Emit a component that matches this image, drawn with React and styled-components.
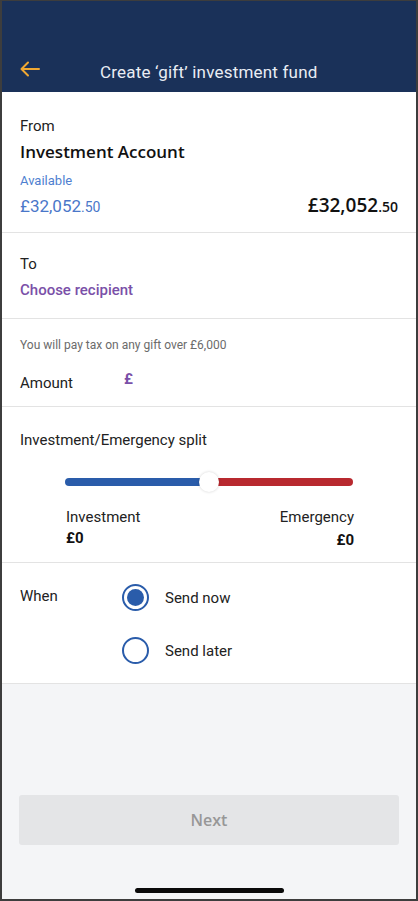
import React, { useState } from 'react';
import styled, { createGlobalStyle } from 'styled-components';

const GlobalStyle = createGlobalStyle`
  html, body {
    margin: 0;
    padding: 0;
    background: #ffffff;
  }
  * {
    box-sizing: border-box;
  }
  body {
    font-family: Roboto, "Liberation Sans", sans-serif;
    color: #1c1c1c;
  }
`;

const App = () => {
  const [when, setWhen] = useState('now');
  const split = 50;

  return (
    <Frame>
      <GlobalStyle />
      <Header>
        <BackButton aria-label="Back">
          <svg width="20" height="16" viewBox="0 0 20 16" fill="none">
            <path d="M19 8H2M8 1.5L1.5 8L8 14.5" stroke="#f0a832" strokeWidth="2" strokeLinecap="round" strokeLinejoin="round" />
          </svg>
        </BackButton>
        <Title>Create ‘gift’ investment fund</Title>
      </Header>

      <Section pad="24px 18px 14px">
        <Label>From</Label>
        <AccountName>Investment Account</AccountName>
        <AvailableLabel>Available</AvailableLabel>
        <AmountRow>
          <AvailableAmount>£32,052<small>.50</small></AvailableAmount>
          <Balance>£32,052<small>.50</small></Balance>
        </AmountRow>
      </Section>

      <Section pad="21px 18px 18px">
        <Label>To</Label>
        <Recipient>Choose recipient</Recipient>
      </Section>

      <Section pad="18px 18px 13px">
        <Note>You will pay tax on any gift over £6,000</Note>
        <AmountLine>
          <Label>Amount</Label>
          <Pound>£</Pound>
        </AmountLine>
      </Section>

      <Section pad="23px 18px 12px">
        <Label>Investment/Emergency split</Label>
        <SliderWrap>
          <Track>
            <TrackLeft style={{ width: `${split}%` }} />
            <TrackRight />
            <Thumb style={{ left: `${split}%` }} />
          </Track>
        </SliderWrap>
        <SplitRow>
          <SplitCol>
            <SplitLabel>Investment</SplitLabel>
            <SplitValue>£0</SplitValue>
          </SplitCol>
          <SplitCol right>
            <SplitLabel>Emergency</SplitLabel>
            <SplitValue down>£0</SplitValue>
          </SplitCol>
        </SplitRow>
      </Section>

      <Section pad="23px 18px 19px">
        <WhenGrid>
          <WhenLabel>When</WhenLabel>
          <RadioList>
            <RadioRow onClick={() => setWhen('now')}>
              <Radio checked={when === 'now'} />
              <RadioText>Send now</RadioText>
            </RadioRow>
            <RadioRow onClick={() => setWhen('later')}>
              <Radio checked={when === 'later'} />
              <RadioText>Send later</RadioText>
            </RadioRow>
          </RadioList>
        </WhenGrid>
      </Section>

      <Footer>
        <NextButton disabled>Next</NextButton>
        <HomeBar />
      </Footer>
    </Frame>
  );
};

const Frame = styled.div`
  width: 418px;
  height: 901px;
  border: 2px solid #3d3d3d;
  border-top-width: 1px;
  display: flex;
  flex-direction: column;
  background: #ffffff;
  overflow: hidden;
`;

const Header = styled.div`
  height: 91px;
  background: #1a3159;
  display: flex;
  align-items: flex-end;
  padding: 0 0 7px 18px;
  flex-shrink: 0;
`;

const BackButton = styled.button`
  background: none;
  border: none;
  padding: 0;
  width: 24px;
  height: 24px;
  display: flex;
  align-items: center;
  margin-bottom: 4px;
  cursor: pointer;
`;

const Title = styled.div`
  color: #e9edf4;
  font-size: 17px;
  font-family: Roboto, "Liberation Sans", sans-serif;
  margin-left: 56px;
  line-height: 26px;
  letter-spacing: 0.2px;
`;

const Section = styled.div`
  padding: ${props => props.pad};
  border-bottom: 1px solid #e3e3e3;
  background: #ffffff;
  flex-shrink: 0;
`;

const Label = styled.div`
  font-size: 15px;
  color: #222;
  line-height: 20px;
`;

const AccountName = styled.div`
  font-family: "Open Sans", sans-serif;
  font-weight: 600;
  font-size: 17px;
  color: #111;
  margin-top: 4px;
  line-height: 24px;
`;

const AvailableLabel = styled.div`
  font-size: 13px;
  color: #4f7fd0;
  margin-top: 8px;
  line-height: 18px;
`;

const AmountRow = styled.div`
  display: flex;
  justify-content: space-between;
  align-items: baseline;
  margin-top: 4px;
`;

const AvailableAmount = styled.div`
  font-size: 17px;
  color: #4a77c9;
  line-height: 22px;

  small {
    font-size: 14px;
  }
`;

const Balance = styled.div`
  font-family: "Open Sans", sans-serif;
  font-weight: 600;
  font-size: 19px;
  color: #111;
  line-height: 22px;

  small {
    font-size: 14px;
  }
`;

const Recipient = styled.div`
  font-weight: 500;
  font-size: 15px;
  color: #7a50a8;
  margin-top: 6px;
  line-height: 20px;
`;

const Note = styled.div`
  font-size: 12px;
  color: #6b6b6b;
  line-height: 16px;
`;

const AmountLine = styled.div`
  display: flex;
  align-items: flex-end;
  margin-top: 16px;
`;

const Pound = styled.span`
  color: #7a50a8;
  font-weight: 700;
  font-size: 15px;
  line-height: 20px;
  margin-left: 51px;
  margin-bottom: 4px;
`;

const SliderWrap = styled.div`
  padding: 28px 45px 0 45px;
`;

const Track = styled.div`
  position: relative;
  height: 8px;
  display: flex;
`;

const TrackLeft = styled.div`
  height: 100%;
  background: #2a5caa;
  border-radius: 4px 0 0 4px;
`;

const TrackRight = styled.div`
  flex: 1;
  height: 100%;
  background: #b8292f;
  border-radius: 0 4px 4px 0;
`;

const Thumb = styled.div`
  position: absolute;
  top: 50%;
  width: 20px;
  height: 20px;
  border-radius: 50%;
  background: #ffffff;
  transform: translate(-50%, -50%);
  box-shadow: 0 0 3px rgba(0, 0, 0, 0.18);
`;

const SplitRow = styled.div`
  display: flex;
  justify-content: space-between;
  padding: 0 44px 0 46px;
  margin-top: 21px;
`;

const SplitCol = styled.div`
  display: flex;
  flex-direction: column;
  align-items: ${props => (props.right ? 'flex-end' : 'flex-start')};
`;

const SplitLabel = styled.div`
  font-size: 15px;
  color: #222;
  line-height: 20px;
`;

const SplitValue = styled.div`
  font-weight: 700;
  font-size: 15px;
  color: #111;
  line-height: 20px;
  margin-top: ${props => (props.down ? '3px' : '1px')};
`;

const WhenGrid = styled.div`
  display: flex;
`;

const WhenLabel = styled.div`
  font-size: 15px;
  color: #222;
  width: 102px;
  line-height: 20px;
`;

const RadioList = styled.div`
  display: flex;
  flex-direction: column;
  gap: 26px;
  margin-top: -2px;
`;

const RadioRow = styled.div`
  display: flex;
  align-items: center;
  gap: 16px;
  cursor: pointer;
`;

const Radio = styled.span`
  width: 27px;
  height: 27px;
  border-radius: 50%;
  border: 2px solid #2a5caa;
  display: flex;
  align-items: center;
  justify-content: center;

  &::after {
    content: '';
    width: 17px;
    height: 17px;
    border-radius: 50%;
    background: #2a5caa;
    display: ${props => (props.checked ? 'block' : 'none')};
  }
`;

const RadioText = styled.span`
  font-size: 15px;
  color: #222;
`;

const Footer = styled.div`
  flex: 1;
  background: #f4f5f7;
  display: flex;
  flex-direction: column;
  align-items: center;
  justify-content: flex-end;
  padding: 0 17px 6px;
`;

const NextButton = styled.button`
  width: 100%;
  height: 50px;
  border: none;
  border-radius: 3px;
  background: #e4e5e7;
  color: #979797;
  font-family: "Open Sans", sans-serif;
  font-weight: 600;
  font-size: 16px;
  cursor: default;
`;

const HomeBar = styled.div`
  width: 149px;
  height: 5px;
  border-radius: 3px;
  background: #0a0a0a;
  margin-top: 43px;
`;

export default App;
